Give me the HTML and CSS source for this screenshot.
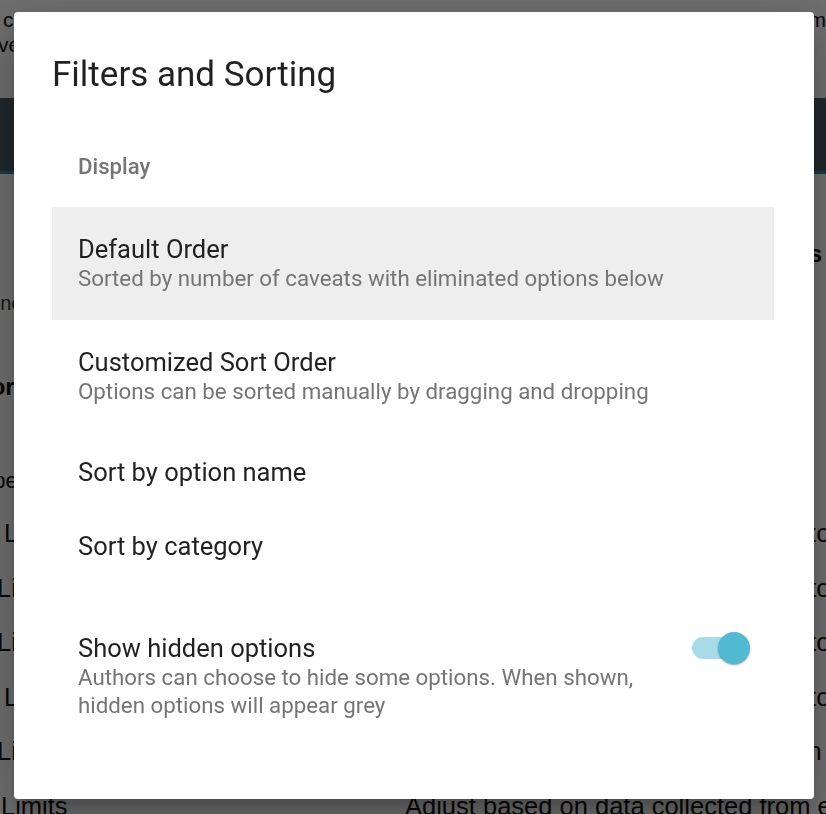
FILE: index.html
```html
<!DOCTYPE html>
<html lang="en">
<head>
<meta charset="utf-8">
<title>Filters and Sorting</title>
<link rel="stylesheet" href="styles.css">
</head>
<body>
<div class="page">
  <p class="intro first">compare the options and their caveats. Options can be eliminated if they do not match most needs</p>
  <p class="intro second">very well and options are then listed</p>
  <div class="band"></div>
  <div class="heading-row"><span class="heading">Display options</span></div>
  <p class="note">none</p>
  <h3 class="sub">Priorities for</h3>
  <p class="type">Type</p>
  <div class="table">
    <div class="row"><span class="name shift">Lower</span><span class="desc">Adjust based on data collected due to</span></div>
    <div class="row"><span class="name left">Limits</span><span class="desc">Adjust based on data collected due to</span></div>
    <div class="row"><span class="name left">Limits</span><span class="desc">Adjust based on data collected due to</span></div>
    <div class="row"><span class="name shift">Lower</span><span class="desc">Adjust based on data collected due to</span></div>
    <div class="row"><span class="name left">Limits</span><span class="desc">Adjust based on data collected again</span></div>
    <div class="row"><span class="name">Limits</span><span class="desc">Adjust based on data collected from every</span></div>
  </div>
</div>
<div class="overlay"></div>
<div class="dialog" role="dialog">
  <h2 class="dialog-title">Filters and Sorting</h2>
  <div class="list">
    <div class="subheader">Display</div>
    <div class="item two selected">
      <div class="item-text">
        <div class="primary">Default Order</div>
        <div class="secondary">Sorted by number of caveats with eliminated options below</div>
      </div>
    </div>
    <div class="item two">
      <div class="item-text">
        <div class="primary">Customized Sort Order</div>
        <div class="secondary">Options can be sorted manually by dragging and dropping</div>
      </div>
    </div>
    <div class="item one">
      <div class="item-text"><div class="primary">Sort by option name</div></div>
    </div>
    <div class="item one">
      <div class="item-text"><div class="primary">Sort by category</div></div>
    </div>
    <div class="item two toggle-item">
      <div class="item-text narrow">
        <div class="primary">Show hidden options</div>
        <div class="secondary">Authors can choose to hide some options. When shown, hidden options will appear grey</div>
      </div>
      <div class="switch"><span class="track"></span><span class="thumb"></span></div>
    </div>
  </div>
</div>
</body>
</html>
```
FILE: styles.css
```css
html, body {
  margin: 0;
  padding: 0;
  height: 100%;
  overflow: hidden;
}
body {
  background: #ffffff;
  font-family: "Liberation Sans", Arial, sans-serif;
  color: #111;
}
.page {
  height: 814px;
  overflow: hidden;
  padding-top: 7px;
  box-sizing: border-box;
}
.intro {
  margin: 0;
  font-size: 21px;
  line-height: 25px;
  white-space: nowrap;
}
.intro.first {
  margin-left: 3px;
}
.intro.second {
  margin-left: -2px;
}
.band {
  margin-top: 41px;
  height: 73px;
  background: #4a5a62;
  border-bottom: 3px solid #2e8a99;
}
.heading-row {
  margin-top: 65px;
  display: flex;
  justify-content: flex-end;
  padding-right: 4px;
}
.heading {
  font-size: 24px;
  line-height: 30px;
  font-weight: bold;
}
.note {
  margin: 22px 0 0 -22px;
  font-size: 20px;
  line-height: 24px;
  color: #333;
}
.sub {
  margin: 57px 0 0 -128px;
  font-size: 24px;
  line-height: 30px;
  font-weight: bold;
}
.type {
  margin: 66px 0 0 -30px;
  font-size: 22px;
  line-height: 26px;
}
.table {
  margin-top: 12px;
}
.row {
  display: flex;
  height: 54.6px;
  line-height: 54.6px;
  font-size: 25.5px;
  white-space: nowrap;
}
.name {
  width: 405px;
  flex: none;
  padding-left: 1px;
  box-sizing: border-box;
}
.name.shift {
  padding-left: 4px;
}
.name.left {
  margin-left: -4px;
  width: 409px;
}
.desc {
  flex: none;
}
.overlay {
  position: fixed;
  inset: 0;
  background: rgba(0, 0, 0, 0.57);
}
.dialog {
  position: fixed;
  left: 14px;
  top: 12px;
  width: 800px;
  height: 787px;
  box-sizing: border-box;
  padding-top: 42px;
  background: #ffffff;
  border-radius: 4px;
  box-shadow: 0 11px 15px -7px rgba(0,0,0,0.2), 0 24px 38px 3px rgba(0,0,0,0.14), 0 9px 46px 8px rgba(0,0,0,0.12);
  font-family: Roboto, "Noto Sans", sans-serif;
  color: rgba(0, 0, 0, 0.87);
}
.dialog-title {
  margin: 0;
  padding-left: 38px;
  font-size: 35px;
  line-height: 42px;
  font-weight: 400;
}
.list {
  margin: 0 40px 0 38px;
}
.subheader {
  margin-top: 56px;
  padding: 0 0 27px 26px;
  font-size: 22.2px;
  line-height: 28px;
  font-weight: 500;
  color: #757575;
}
.item {
  display: flex;
  padding-left: 26px;
  padding-right: 24px;
}
.item.two {
  padding-top: 27px;
  padding-bottom: 28px;
}
.item.one {
  padding-top: 24px;
  padding-bottom: 20px;
}
.item.selected {
  background: #eeeeee;
}
.item-text {
  flex: 1;
  min-width: 0;
}
.item-text.narrow {
  flex: none;
  width: 598px;
  margin-right: 16px;
}
.primary {
  font-size: 25.5px;
  line-height: 30px;
}
.secondary {
  font-size: 22.3px;
  line-height: 28px;
  color: #757575;
}
.toggle-item {
  margin-top: 25px;
}
.switch {
  position: relative;
  flex: none;
  width: 58px;
  height: 32px;
  margin-top: -1px;
}
.track {
  position: absolute;
  left: 0;
  top: 5px;
  width: 51px;
  height: 22px;
  border-radius: 11px;
  background: #a8dbe8;
}
.thumb {
  position: absolute;
  right: 0;
  top: 0;
  width: 32px;
  height: 32px;
  border-radius: 50%;
  background: #52b9d2;
  box-shadow: 0 1px 3px rgba(0,0,0,0.2), 0 1px 1px rgba(0,0,0,0.14), 0 2px 1px -1px rgba(0,0,0,0.12);
}
```
